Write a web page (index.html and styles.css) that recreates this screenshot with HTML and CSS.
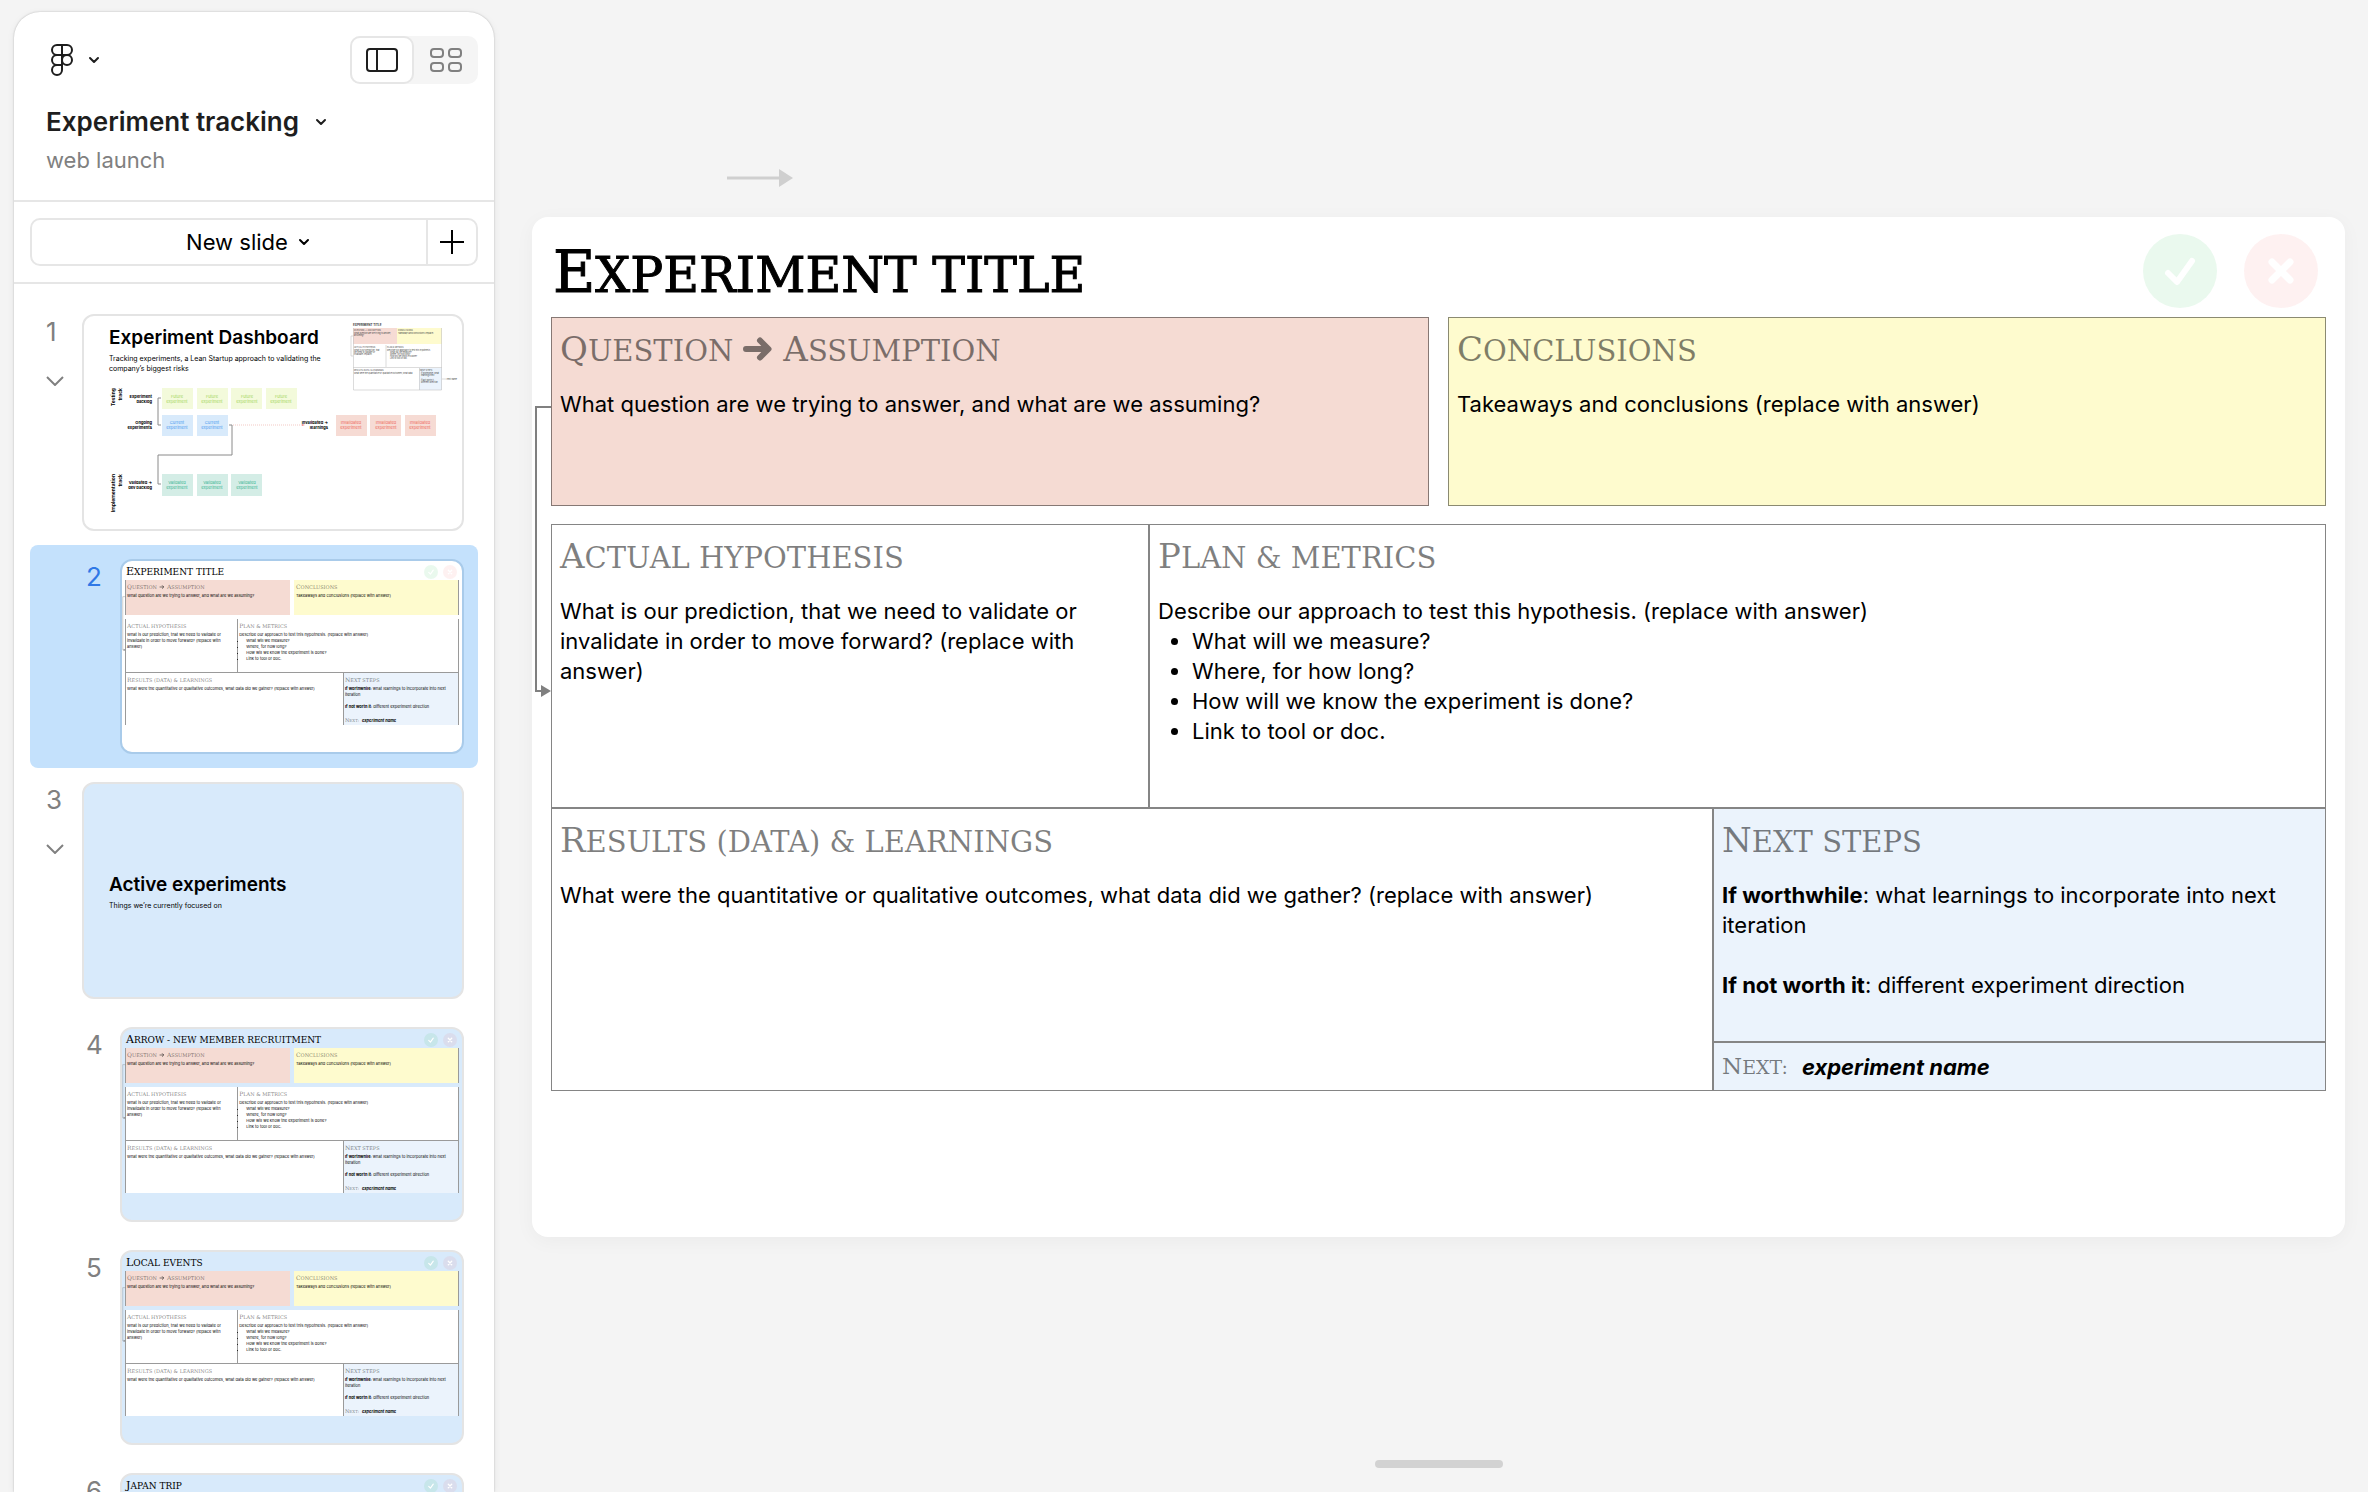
FILE: index.html
```html
<!DOCTYPE html>
<html lang="en">
<head>
<meta charset="utf-8">
<title>Experiment tracking</title>
<link rel="stylesheet" href="styles.css">
</head>
<body>
<svg class="defs" aria-hidden="true">
  <symbol id="chevron" viewBox="0 0 12 8"><path d="M2 2l4 4 4-4" fill="none" stroke="currentColor" stroke-width="2" stroke-linecap="round" stroke-linejoin="round"/></symbol>
  <symbol id="fold" viewBox="0 0 18 10"><path d="M1 1l8 8 8-8" fill="none" stroke="currentColor" stroke-width="2"/></symbol>
  <symbol id="arrow" viewBox="0 0 30 24"><path d="M3 12h20M17 3.500l8.500 8.500-8.500 8.500" fill="none" stroke="currentColor" stroke-width="6" stroke-linecap="round" stroke-linejoin="round"/></symbol>
  <symbol id="mark-yes" viewBox="0 0 74 74"><circle cx="37" cy="37" r="37" fill="#34c759" fill-opacity=".1"/><path d="M25 39l9 9 15-21" fill="none" stroke="#fff" stroke-width="6" stroke-linecap="round" stroke-linejoin="round"/></symbol>
  <symbol id="mark-no" viewBox="0 0 74 74"><circle cx="37" cy="37" r="37" fill="#f24e4e" fill-opacity=".08"/><path d="M28 28l18 18M46 28l-18 18" fill="none" stroke="#fff" stroke-width="7" stroke-linecap="round"/></symbol>
  <symbol id="link" viewBox="0 0 1813 1020" preserveAspectRatio="none"><path d="M19 190H4v284h6" fill="none" stroke="#808080" stroke-width="2"/><path d="M9 468l10 6-10 6z" fill="#808080"/></symbol>
</svg>
<div class="app">
  <aside class="sidebar">
    <header class="top">
      <div class="bar">
        <button class="plain logo" aria-label="Main menu">
          <svg class="figma" viewBox="0 0 24 34" fill="none" stroke="currentColor" stroke-width="2"><path d="M12 2H7a5 5 0 0 0 0 10h10a5 5 0 0 0 0-10h-5zM12 2v20H7a5 5 0 0 1 0-10M12 22H7a5 5 0 1 0 5 5z"/><circle cx="17" cy="17" r="5"/></svg>
          <svg class="chev"><use href="#chevron"/></svg>
        </button>
        <div class="toggle">
          <button class="view view-on" aria-label="Slide view"><svg viewBox="0 0 34 26" fill="none" stroke="currentColor" stroke-width="2"><rect x="2" y="2" width="30" height="22" rx="3"/><path d="M12 2v22"/></svg></button>
          <button class="view" aria-label="Grid view"><svg viewBox="0 0 34 26" fill="none" stroke="currentColor" stroke-width="2"><rect x="2" y="2" width="12" height="8" rx="3"/><rect x="20" y="2" width="12" height="8" rx="3"/><rect x="2" y="16" width="12" height="8" rx="3"/><rect x="20" y="16" width="12" height="8" rx="3"/></svg></button>
        </div>
      </div>
      <button class="plain file">Experiment tracking <svg class="chev"><use href="#chevron"/></svg></button>
      <p class="project">web launch</p>
    </header>
    <div class="create">
      <div class="split">
        <button class="plain new">New slide <svg class="chev"><use href="#chevron"/></svg></button>
        <button class="plain plus" aria-label="Add slide"><svg viewBox="0 0 24 24"><path d="M12 0v24M0 12h24" stroke="currentColor" stroke-width="2"/></svg></button>
      </div>
    </div>
    <nav class="list">
      <div class="row">
        <div class="num"><span>1</span><svg class="fold"><use href="#fold"/></svg></div>
        <a class="thumb wide" href="#s1">
          <svg class="diagram" viewBox="0 0 378 213">
            <text class="d-title" x="25" y="28">Experiment Dashboard</text>
            <text class="d-sub" x="25" y="45">Tracking experiments, a Lean Startup approach to validating the</text>
            <text class="d-sub" x="25" y="55">company’s biggest risks</text>
            <g class="d-side"><text transform="translate(31 72) rotate(-90)">Testing</text><text transform="translate(38 72) rotate(-90)">track</text><text transform="translate(31 158) rotate(-90)">Implementation</text><text transform="translate(38 158) rotate(-90)">track</text></g>
            <g class="d-label"><text x="68" y="82">Experiment</text><text x="68" y="87">backlog</text><text x="68" y="108">Ongoing</text><text x="68" y="113">experiments</text><text x="68" y="168">Validated →</text><text x="68" y="173">dev backlog</text><text x="244" y="108">Invalidated →</text><text x="244" y="113">learnings</text></g>
            <path d="M77 82h-3v27h3M148 109v30H74v29h3M145 109h3" fill="none" stroke="#8a8a8a"/>
            <path d="M149 109h70" stroke="#f3c9c4" stroke-dasharray="1 1"/><path d="M218 108l3 1-3 1z" fill="#e88"/>
            <g fill="#f3fadb"><path d="M78 72h31v21H78zM113 72h31v21h-31zM147 72h31v21h-31zM182 72h31v21h-31z"/></g>
            <g fill="#d8eafb"><path d="M78 99h31v21H78zM113 99h31v21h-31z"/></g>
            <g fill="#f6dbd4"><path d="M252 99h31v21h-31zM286 99h31v21h-31zM321 99h31v21h-31z"/></g>
            <g fill="#d4ede6"><path d="M78 158h31v22H78zM113 158h31v22h-31zM147 158h31v22h-31z"/></g>
            <g class="d-card" fill="#a3d65c"><text x="93" y="82">Future</text><text x="93" y="87">experiment</text><text x="128" y="82">Future</text><text x="128" y="87">experiment</text><text x="163" y="82">Future</text><text x="163" y="87">experiment</text><text x="197" y="82">Future</text><text x="197" y="87">experiment</text></g>
            <g class="d-card" fill="#4a9bf0"><text x="93" y="108">Current</text><text x="93" y="113">experiment</text><text x="128" y="108">Current</text><text x="128" y="113">experiment</text></g>
            <g class="d-card" fill="#ee6a5c"><text x="267" y="108">Invalidated</text><text x="267" y="113">experiment</text><text x="302" y="108">Invalidated</text><text x="302" y="113">experiment</text><text x="336" y="108">Invalidated</text><text x="336" y="113">experiment</text></g>
            <g class="d-card" fill="#35b491"><text x="93" y="168">Validated</text><text x="93" y="173">experiment</text><text x="128" y="168">Validated</text><text x="128" y="173">experiment</text><text x="163" y="168">Validated</text><text x="163" y="173">experiment</text></g>
            <path d="M269 12h44v16h-44z" fill="#f6dbd4"/><path d="M313 12h45v16h-45z" fill="#fefbce"/><path d="M335 52h23v22h-23z" fill="#ebf3fc"/>
            <path d="M269.500 12v62h88V12M302 29v22M269 51.500h89M335.500 52v22M269 20h-2v20h2M358 63h5" fill="none" stroke="#c4c4c4" stroke-width=".6"/>
            <g class="d-mini"><text class="d-head" x="269" y="10">EXPERIMENT TITLE</text><text x="270" y="15">QUESTION → ASSUMPTION</text><text x="270" y="18">What question are we trying to answer,</text><text x="270" y="20">assuming?</text><text x="314" y="15">CONCLUSIONS</text><text x="314" y="18">Takeaways and conclusions (replace)</text><text x="270" y="32">ACTUAL HYPOTHESIS</text><text x="270" y="35">What is our prediction, that</text><text x="270" y="37">we need to validate or</text><text x="270" y="39">invalidate (replace)</text><text x="303" y="32">PLAN &amp; METRICS</text><text x="303" y="35">Describe our approach to test this hypothesis.</text><text x="306" y="37">What will we measure?</text><text x="306" y="39">Where, for how long?</text><text x="306" y="41">How will we know it is done?</text><text x="306" y="43">Link to tool or doc.</text><text x="270" y="55">RESULTS (DATA) &amp; LEARNINGS</text><text x="270" y="58">What were the quantitative or qualitative outcomes, what data</text><text x="336" y="55">NEXT STEPS</text><text x="337" y="58">If worthwhile: what</text><text x="337" y="60">learnings next</text><text x="337" y="65">If not worth it:</text><text x="337" y="67">different direction</text><text x="363" y="64">next name</text></g>
          </svg>
        </a>
      </div>
      <div class="row nested current">
        <div class="num"><span>2</span></div>
        <a class="thumb" href="#s2">
          <article class="slide mini">
            <svg class="link"><use href="#link"/></svg>
            <header class="title-row"><h2 class="title">Experiment title</h2><div class="marks"><svg><use href="#mark-yes"/></svg><svg><use href="#mark-no"/></svg></div></header>
            <div class="pair">
              <section class="cell ask"><h3><span>Question</span><svg class="to"><use href="#arrow"/></svg><span>Assumption</span></h3><p>What question are we trying to answer, and what are we assuming?</p></section>
              <section class="cell found"><h3><span>Conclusions</span></h3><p>Takeaways and conclusions (replace with answer)</p></section>
            </div>
            <div class="plan">
              <section class="cell"><h3><span>Actual hypothesis</span></h3><p>What is our prediction, that we need to validate or invalidate in order to move forward? (replace with answer)</p></section>
              <section class="cell"><h3><span>Plan &amp; metrics</span></h3><p>Describe our approach to test this hypothesis. (replace with answer)</p><ul><li>What will we measure?</li><li>Where, for how long?</li><li>How will we know the experiment is done?</li><li>Link to tool or doc.</li></ul></section>
            </div>
            <div class="outcome">
              <section class="cell"><h3><span>Results (data) &amp; learnings</span></h3><p>What were the quantitative or qualitative outcomes, what data did we gather? (replace with answer)</p></section>
              <div class="steps"><section class="cell"><h3><span>Next steps</span></h3><p><b>If worthwhile</b>: what learnings to incorporate into next iteration</p><p class="gap"><b>If not worth it</b>: different experiment direction</p></section><p class="cell next"><span class="next-label">Next:</span><b><i>experiment name</i></b></p></div>
            </div>
          </article>
        </a>
      </div>
      <div class="row">
        <div class="num"><span>3</span><svg class="fold"><use href="#fold"/></svg></div>
        <a class="thumb wide section" href="#s3"><strong>Active experiments</strong><small>Things we’re currently focused on</small></a>
      </div>
      <div class="row nested">
        <div class="num"><span>4</span></div>
        <a class="thumb tinted" href="#s4">
          <article class="slide mini">
            <svg class="link"><use href="#link"/></svg>
            <header class="title-row"><h2 class="title">Arrow - new member recruitment</h2><div class="marks"><svg><use href="#mark-yes"/></svg><svg><use href="#mark-no"/></svg></div></header>
            <div class="pair">
              <section class="cell ask"><h3><span>Question</span><svg class="to"><use href="#arrow"/></svg><span>Assumption</span></h3><p>What question are we trying to answer, and what are we assuming?</p></section>
              <section class="cell found"><h3><span>Conclusions</span></h3><p>Takeaways and conclusions (replace with answer)</p></section>
            </div>
            <div class="plan">
              <section class="cell"><h3><span>Actual hypothesis</span></h3><p>What is our prediction, that we need to validate or invalidate in order to move forward? (replace with answer)</p></section>
              <section class="cell"><h3><span>Plan &amp; metrics</span></h3><p>Describe our approach to test this hypothesis. (replace with answer)</p><ul><li>What will we measure?</li><li>Where, for how long?</li><li>How will we know the experiment is done?</li><li>Link to tool or doc.</li></ul></section>
            </div>
            <div class="outcome">
              <section class="cell"><h3><span>Results (data) &amp; learnings</span></h3><p>What were the quantitative or qualitative outcomes, what data did we gather? (replace with answer)</p></section>
              <div class="steps"><section class="cell"><h3><span>Next steps</span></h3><p><b>If worthwhile</b>: what learnings to incorporate into next iteration</p><p class="gap"><b>If not worth it</b>: different experiment direction</p></section><p class="cell next"><span class="next-label">Next:</span><b><i>experiment name</i></b></p></div>
            </div>
          </article>
        </a>
      </div>
      <div class="row nested">
        <div class="num"><span>5</span></div>
        <a class="thumb tinted" href="#s5">
          <article class="slide mini">
            <svg class="link"><use href="#link"/></svg>
            <header class="title-row"><h2 class="title">Local events</h2><div class="marks"><svg><use href="#mark-yes"/></svg><svg><use href="#mark-no"/></svg></div></header>
            <div class="pair">
              <section class="cell ask"><h3><span>Question</span><svg class="to"><use href="#arrow"/></svg><span>Assumption</span></h3><p>What question are we trying to answer, and what are we assuming?</p></section>
              <section class="cell found"><h3><span>Conclusions</span></h3><p>Takeaways and conclusions (replace with answer)</p></section>
            </div>
            <div class="plan">
              <section class="cell"><h3><span>Actual hypothesis</span></h3><p>What is our prediction, that we need to validate or invalidate in order to move forward? (replace with answer)</p></section>
              <section class="cell"><h3><span>Plan &amp; metrics</span></h3><p>Describe our approach to test this hypothesis. (replace with answer)</p><ul><li>What will we measure?</li><li>Where, for how long?</li><li>How will we know the experiment is done?</li><li>Link to tool or doc.</li></ul></section>
            </div>
            <div class="outcome">
              <section class="cell"><h3><span>Results (data) &amp; learnings</span></h3><p>What were the quantitative or qualitative outcomes, what data did we gather? (replace with answer)</p></section>
              <div class="steps"><section class="cell"><h3><span>Next steps</span></h3><p><b>If worthwhile</b>: what learnings to incorporate into next iteration</p><p class="gap"><b>If not worth it</b>: different experiment direction</p></section><p class="cell next"><span class="next-label">Next:</span><b><i>experiment name</i></b></p></div>
            </div>
          </article>
        </a>
      </div>
      <div class="row nested">
        <div class="num"><span>6</span></div>
        <a class="thumb tinted" href="#s6">
          <article class="slide mini">
            <header class="title-row"><h2 class="title">Japan trip</h2><div class="marks"><svg><use href="#mark-yes"/></svg><svg><use href="#mark-no"/></svg></div></header>
          </article>
        </a>
      </div>
    </nav>
  </aside>
  <main class="canvas">
    <svg class="stray" viewBox="0 0 66 18"><path d="M0 9h54" stroke="#cfcfcf" stroke-width="3"/><path d="M52 0l14 9-14 9z" fill="#cfcfcf"/></svg>
    <article class="slide" id="s2">
      <svg class="link"><use href="#link"/></svg>
      <header class="title-row"><h1 class="title">Experiment title</h1><div class="marks"><svg><use href="#mark-yes"/></svg><svg><use href="#mark-no"/></svg></div></header>
      <div class="pair">
        <section class="cell ask"><h3><span>Question</span><svg class="to"><use href="#arrow"/></svg><span>Assumption</span></h3><p>What question are we trying to answer, and what are we assuming?</p></section>
        <section class="cell found"><h3><span>Conclusions</span></h3><p>Takeaways and conclusions (replace with answer)</p></section>
      </div>
      <div class="plan">
        <section class="cell"><h3><span>Actual hypothesis</span></h3><p>What is our prediction, that we need to validate or invalidate in order to move forward? (replace with answer)</p></section>
        <section class="cell"><h3><span>Plan &amp; metrics</span></h3><p>Describe our approach to test this hypothesis. (replace with answer)</p><ul><li>What will we measure?</li><li>Where, for how long?</li><li>How will we know the experiment is done?</li><li>Link to tool or doc.</li></ul></section>
      </div>
      <div class="outcome">
        <section class="cell"><h3><span>Results (data) &amp; learnings</span></h3><p>What were the quantitative or qualitative outcomes, what data did we gather? (replace with answer)</p></section>
        <div class="steps"><section class="cell"><h3><span>Next steps</span></h3><p><b>If worthwhile</b>: what learnings to incorporate into next iteration</p><p class="gap"><b>If not worth it</b>: different experiment direction</p></section><p class="cell next"><span class="next-label">Next:</span><b><i>experiment name</i></b></p></div>
      </div>
    </article>
    <div class="handle"></div>
  </main>
</div>
</body>
</html>
```
FILE: styles.css
```css
* { box-sizing: border-box; margin: 0; padding: 0; }
body { background: #f4f4f4; color: #1e1e1e; font-family: Inter, "Liberation Sans", sans-serif; font-size: 22px; }
.defs { position: absolute; width: 0; height: 0; }
.app { display: flex; height: 100vh; overflow: hidden; padding: 12px 23px 0 14px; gap: 38px; }

/* sidebar */
.sidebar { flex: none; width: 480px; display: flex; flex-direction: column; background: #fff; border-radius: 26px 26px 0 0; box-shadow: 0 0 2px rgba(0, 0, 0, .25), 0 2px 8px rgba(0, 0, 0, .06); overflow: hidden; }
.plain { border: 0; background: none; font: inherit; color: inherit; display: flex; align-items: center; }
.chev { width: 12px; height: 8px; }
.top { height: 190px; padding: 24px 16px 0 32px; border-bottom: 2px solid #e6e6e6; flex: none; }
.bar { display: flex; justify-content: space-between; align-items: center; }
.logo { gap: 14px; padding-left: 4px; }
.figma { width: 24px; height: 34px; }
.toggle { display: flex; background: #f5f5f5; border-radius: 10px; }
.view { width: 64px; height: 48px; display: grid; place-items: center; border: 2px solid transparent; border-radius: 10px; background: none; color: #808080; }
.view-on { background: #fff; border-color: #e6e6e6; color: #1e1e1e; }
.view svg { width: 34px; height: 26px; }
.file { margin-top: 22px; gap: 16px; font-size: 26px; font-weight: 600; line-height: 32px; }
.project { margin-top: 8px; color: #808080; line-height: 28px; }
.create { flex: none; padding: 16px; height: 82px; border-bottom: 2px solid #e6e6e6; }
.split { display: flex; height: 48px; border: 2px solid #e6e6e6; border-radius: 10px; color: #000; }
.new { flex: 1; justify-content: center; gap: 10px; padding-left: 38px; }
.plus { width: 50px; justify-content: center; border-left: 2px solid #e6e6e6; }
.plus svg { width: 24px; height: 24px; }
.list { flex: 1; overflow: hidden; padding: 16px 16px 0; }
.row { display: flex; justify-content: space-between; padding: 14px 14px 14px 16px; border-radius: 8px; }
.nested { padding-left: 56px; }
.num { display: flex; flex-direction: column; gap: 28px; padding-top: 2px; font-size: 26px; line-height: 32px; color: #808080; }
.fold { width: 18px; height: 10px; }
.current { background: #c4e1fc; }
.current .num { color: #2f78e6; }
.thumb { width: 344px; height: 195px; border: 2px solid #e4e4e4; border-radius: 12px; background: #fff; color: #000; text-decoration: none; overflow: hidden; }
.current .thumb { border-color: #a9cbea; }
.wide { width: 382px; height: 217px; }
.tinted, .section { background: #d8eafb; }
.section { display: flex; flex-direction: column; justify-content: center; gap: 4px; padding-left: 25px; padding-top: 2px; }
.section strong { font-size: 19px; line-height: 24px; font-weight: 600; }
.section small { font-size: 7px; line-height: 10px; }

/* dashboard thumbnail */
.diagram { display: block; width: 100%; height: 100%; font-size: 4px; fill: #000; }
.d-title { font-size: 19px; font-weight: 600; }
.d-sub { font-size: 7px; }
.d-side { font-size: 5px; font-weight: 700; text-anchor: end; }
.d-label { font-weight: 700; text-anchor: end; }
.d-card { text-anchor: middle; }
.d-mini { font-size: 2px; fill: #444; }
.d-head { font-size: 3px; font-weight: 700; }

/* canvas */
.canvas { position: relative; flex: 1; min-width: 0; padding-top: 205px; }
.stray { position: absolute; left: 195px; top: 157px; width: 66px; height: 18px; }
.handle { position: absolute; left: calc(50% - 64px); bottom: 24px; width: 128px; height: 8px; border-radius: 4px; background: #d2d2d2; }

/* slide */
.slide { position: relative; width: 100%; aspect-ratio: 16 / 9; padding: 0 19px; background: #fff; border-radius: 16px; box-shadow: 0 4px 20px rgba(0, 0, 0, .04); color: #000; font-size: 22px; line-height: 30px; }
.link { position: absolute; left: 0; top: 0; width: 100%; height: 100%; }
.title-row { display: flex; justify-content: space-between; align-items: center; height: 100px; padding: 8px 8px 0 2px; }
.title, .cell h3, .next-label { font-family: "DejaVu Serif", serif; font-weight: 400; text-transform: uppercase; }
.title { padding-top: 6px; font-size: 49px; line-height: 70px; -webkit-text-stroke: 1px #000; }
.title::first-letter { font-size: 58px; line-height: 70px; }
.marks { display: flex; gap: 27px; }
.marks svg { width: 74px; height: 74px; }
.pair { display: grid; grid-template-columns: 1fr 1fr; gap: 19px; height: 189px; margin-bottom: 18px; }
.plan { display: grid; grid-template-columns: 598fr 1177fr; height: 284px; }
.outcome { display: grid; grid-template-columns: 1162fr 613fr; height: 283px; }
.cell { border: 1px solid #858585; padding: 11px 8px 0; min-width: 0; }
.ask { background: #f5dbd3; }
.found { background: #fefbce; }
.ask, .found { border-color: rgba(0, 0, 0, .45); }
.cell h3 { display: flex; align-items: baseline; font-size: 29px; line-height: 40px; margin-bottom: 18px; color: rgba(0, 0, 0, .5); }
.cell h3 span { display: inline-block; white-space: nowrap; }
.cell h3 span::first-letter { font-size: 34px; }
.to { width: 30px; height: 24px; margin: 0 10px; }
.cell ul { padding-left: 34px; }
.gap { margin-top: 30px; }
.steps { display: grid; grid-template-rows: 1fr 49px; background: #ebf3fc; }
.next { display: flex; align-items: center; gap: 14px; padding-top: 0; }
.next-label { display: inline-block; font-size: 19px; color: rgba(0, 0, 0, .5); }
.next-label::first-letter { font-size: 23px; }

/* slide in the thumbnail scale */
.mini { padding: 0 3px; background: none; box-shadow: none; font-size: 4px; line-height: 6px; }
.mini .title-row { height: 19px; padding: 2px 2px 0 1px; }
.mini .title { padding-top: 0; font-size: 9px; line-height: 14px; -webkit-text-stroke: 0; }
.mini .title::first-letter { font-size: 11px; line-height: 14px; }
.mini .marks { gap: 5px; }
.mini .marks svg { width: 14px; height: 14px; }
.mini .pair { gap: 4px; height: 35px; margin-bottom: 4px; }
.mini .plan { height: 53px; }
.mini .outcome { height: 53px; }
.mini .cell { padding: 3px 8px 0 1px; border-width: 0 0 0 1px; border-color: #9a9a9a; }
.mini .plan .cell, .mini .outcome > .cell { background-color: #fff; }
.mini .outcome { border-top: 1px solid #9a9a9a; }
.mini .plan, .mini .outcome { border-right: 1px solid #9a9a9a; }
.mini .cell.found { border-width: 0 1px 0 0; padding-left: 2px; }
.mini .cell h3 { font-size: 5px; line-height: 8px; margin-bottom: 2px; }
.mini .cell h3 span::first-letter { font-size: 6px; }
.mini .to { width: 6px; height: 4px; margin: 0 2px; }
.mini .cell ul { padding-left: 7px; }
.mini .gap { margin-top: 6px; }
.mini .steps { grid-template-rows: 1fr 9px; }
.mini .cell.next { gap: 3px; padding-top: 0; }
.mini .next-label { font-size: 4px; }
.mini .next-label::first-letter { font-size: 5px; }
```
